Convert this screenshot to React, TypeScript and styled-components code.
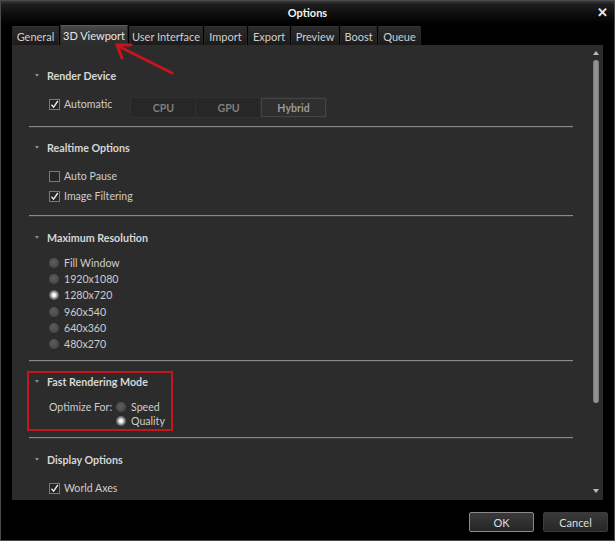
import React from "react";
import styled, { createGlobalStyle } from "styled-components";

const Global = createGlobalStyle`
  html, body { margin: 0; padding: 0; background: #000; }
  body { font-family: "Lato", "Segoe UI", "Open Sans", sans-serif; font-size: 11px; color: #cfcfcf; }
  * { box-sizing: border-box; }
`;

const Window = styled.div`
  position: relative;
  width: 615px;
  height: 541px;
  background: #000;
  border: 1px solid #4a4a4a;
  display: flex;
  flex-direction: column;
  overflow: hidden;
`;

const TitleBar = styled.div`
  position: relative;
  height: 24px;
  display: flex;
  align-items: center;
  justify-content: center;
  background: linear-gradient(#3a3a3a 0px, #1e1e1e 3px, #0a0a0a 16px, #000 24px);
  color: #f2f2f2;
  font-weight: 700;
  font-size: 11px;
  padding-bottom: 2px;
`;

const Close = styled.div`
  position: absolute;
  right: 6px;
  top: 3px;
  color: #e8e8e8;
  font-weight: 700;
  font-size: 13px;
`;

const TabRow = styled.div`
  display: flex;
  height: 20px;
  padding-left: 11px;
  align-items: flex-end;
`;

const Tab = styled.div<{ $w: number; $active?: boolean }>`
  width: ${(p) => p.$w}px;
  height: ${(p) => (p.$active ? 20 : 19)}px;
  margin-right: 1px;
  display: flex;
  align-items: center;
  justify-content: center;
  color: ${(p) => (p.$active ? "#e6e6e6" : "#cfcfcf")};
  background: ${(p) =>
    p.$active
      ? "linear-gradient(#4a4a4a, #363636 40%, #2c2c2c)"
      : "linear-gradient(#2c2c2c, #1b1b1b)"};
  border-top: 1px solid ${(p) => (p.$active ? "#5a5a5a" : "#333")};
  border-left: 1px solid #262626;
  border-right: 1px solid #262626;
  font-size: 11px;
`;

const Panel = styled.div`
  margin: 0 11px;
  height: 455px;
  background: #2c2c2c;
  display: flex;
  overflow: hidden;
`;

const Content = styled.div`
  flex: 1;
  padding: 0 15px 0 17px;
  display: flex;
  flex-direction: column;
`;

const Section = styled.div<{ $pt: number; $pb: number }>`
  position: relative;
  padding-top: ${(p) => p.$pt}px;
  padding-bottom: ${(p) => p.$pb}px;
`;

const Header = styled.div`
  height: 16px;
  display: flex;
  align-items: center;
  padding-left: 6px;
  gap: 8px;
  font-weight: 700;
  color: #d6d6d6;
  font-size: 10.7px;
`;

const Caret = styled.span`
  width: 0;
  height: 0;
  border-left: 2.5px solid transparent;
  border-right: 2.5px solid transparent;
  border-top: 3px solid #8a8a8a;
`;

const Body = styled.div<{ $mt: number }>`
  margin-top: ${(p) => p.$mt}px;
  padding-left: 20px;
  display: flex;
  flex-direction: column;
`;

const Row = styled.div<{ $h: number; $w?: number }>`
  height: ${(p) => p.$h}px;
  ${(p) => (p.$w ? `width: ${p.$w}px;` : "")}
  display: flex;
  align-items: center;
  gap: 4px;
  color: #cdcdcd;
  font-size: 10.6px;
  white-space: nowrap;
`;

const DeviceRow = styled.div`
  display: flex;
  align-items: flex-start;
`;

const Box = styled.span`
  width: 11px;
  height: 11px;
  border: 1px solid #7a7a7a;
  background: #262626;
  display: flex;
  align-items: center;
  justify-content: center;
  flex: none;
`;

const Dot = styled.span<{ $on?: boolean }>`
  width: 10px;
  height: 10px;
  border-radius: 50%;
  flex: none;
  margin-right: 1px;
  background: ${(p) =>
    p.$on
      ? "radial-gradient(circle at 50% 50%, #ffffff 0, #f0f0f0 1.8px, #9a9a9a 3.2px, #5a5a5a 5px)"
      : "radial-gradient(circle at 45% 40%, #5e5e5e 0, #4a4a4a 5px)"};
`;

const Segments = styled.div`
  display: flex;
  margin-top: 1px;
  background: #262626;
  border: 1px solid #303030;
`;

const Segment = styled.div<{ $on?: boolean }>`
  width: 65px;
  height: 19px;
  display: flex;
  align-items: center;
  justify-content: center;
  font-weight: 700;
  font-size: 10.6px;
  color: ${(p) => (p.$on ? "#9a9a9a" : "#7e7e7e")};
  background: ${(p) => (p.$on ? "#2f2f2f" : "#272727")};
  border: 1px solid ${(p) => (p.$on ? "#444" : "transparent")};
  border-right: 1px solid ${(p) => (p.$on ? "#444" : "#303030")};
`;

const Divider = styled.div`
  height: 1px;
  background: #8a8a8a;
  box-shadow: 0 1px 0 #3a3a3a;
  flex: none;
`;

const OptimizeGrid = styled.div`
  display: grid;
  grid-template-columns: 67px auto;
  grid-template-rows: 14px 14px;
  align-items: center;
  color: #cdcdcd;
  font-size: 10.6px;
  white-space: nowrap;
`;

const Highlight = styled.div`
  position: absolute;
  left: -2px;
  top: 10px;
  width: 146px;
  height: 60px;
  border: 2px solid #c4161c;
  pointer-events: none;
`;

const ScrollCol = styled.div`
  width: 15px;
  display: flex;
  flex-direction: column;
  align-items: center;
  padding-top: 6px;
`;

const ArrowUp = styled.span`
  width: 0;
  height: 0;
  border-left: 3px solid transparent;
  border-right: 3px solid transparent;
  border-bottom: 4px solid #bdbdbd;
`;

const ArrowDown = styled.span`
  width: 0;
  height: 0;
  border-left: 3px solid transparent;
  border-right: 3px solid transparent;
  border-top: 4px solid #bdbdbd;
  margin-top: 86px;
`;

const Thumb = styled.div`
  margin-top: 5px;
  width: 6px;
  height: 343px;
  border-radius: 3px;
  background: linear-gradient(90deg, #7a7a7a, #9a9a9a 50%, #7a7a7a);
`;

const Footer = styled.div`
  display: flex;
  justify-content: flex-end;
  gap: 9px;
  padding: 12px 6px 0 0;
`;

const Button = styled.div<{ $focus?: boolean }>`
  width: 65px;
  height: 20px;
  display: flex;
  align-items: center;
  justify-content: center;
  color: #dedede;
  border-radius: 2px;
  background: linear-gradient(#3a3a3a, #262626);
  border: 1px solid ${(p) => (p.$focus ? "#8a8a8a" : "#3c3c3c")};
`;

const ArrowOverlay = styled.svg`
  position: absolute;
  left: 0;
  top: 0;
  pointer-events: none;
`;

const Check = () => (
  <svg width="9" height="9" viewBox="0 0 9 9">
    <path d="M1.5 4.8 L3.6 7.2 L7.8 1" fill="none" stroke="#e8e8e8" strokeWidth="1.4" />
  </svg>
);

const CheckItem = ({ label, on }: { label: string; on?: boolean }) => (
  <Row $h={20}>
    <Box>{on && <Check />}</Box>
    {label}
  </Row>
);

const RadioItem = ({ label, on, h }: { label: string; on?: boolean; h: number }) => (
  <Row $h={h}>
    <Dot $on={on} />
    {label}
  </Row>
);

const tabs: [string, number][] = [
  ["General", 47],
  ["3D Viewport", 68],
  ["User Interface", 74],
  ["Import", 43],
  ["Export", 42],
  ["Preview", 48],
  ["Boost", 37],
  ["Queue", 43],
];

const resolutions = ["Fill Window", "1920x1080", "1280x720", "960x540", "640x360", "480x270"];

export default function App() {
  return (
    <>
      <Global />
      <Window>
        <TitleBar>
          Options
          <Close>✕</Close>
        </TitleBar>
        <TabRow>
          {tabs.map(([t, w]) => (
            <Tab key={t} $w={w} $active={t === "3D Viewport"}>
              {t}
            </Tab>
          ))}
        </TabRow>
        <Panel>
          <Content>
            <Section $pt={22} $pb={8}>
              <Header>
                <Caret />
                Render Device
              </Header>
              <Body $mt={13}>
                <DeviceRow>
                  <Row $h={16} $w={81}>
                    <Box>
                      <Check />
                    </Box>
                    Automatic
                  </Row>
                  <Segments>
                    <Segment>CPU</Segment>
                    <Segment>GPU</Segment>
                    <Segment $on>Hybrid</Segment>
                  </Segments>
                </DeviceRow>
              </Body>
            </Section>
            <Divider />
            <Section $pt={12} $pb={9}>
              <Header>
                <Caret />
                Realtime Options
              </Header>
              <Body $mt={11}>
                <CheckItem label="Auto Pause" />
                <CheckItem label="Image Filtering" on />
              </Body>
            </Section>
            <Divider />
            <Section $pt={13} $pb={8}>
              <Header>
                <Caret />
                Maximum Resolution
              </Header>
              <Body $mt={10}>
                {resolutions.map((r) => (
                  <RadioItem key={r} label={r} on={r === "1280x720"} h={16.2} />
                ))}
              </Body>
            </Section>
            <Divider />
            <Section $pt={12} $pb={9}>
              <Highlight />
              <Header>
                <Caret />
                Fast Rendering Mode
              </Header>
              <Body $mt={11}>
                <OptimizeGrid>
                  <span>Optimize For:</span>
                  <RadioItem label="Speed" h={14} />
                  <span />
                  <RadioItem label="Quality" on h={14} />
                </OptimizeGrid>
              </Body>
            </Section>
            <Divider />
            <Section $pt={13} $pb={0}>
              <Header>
                <Caret />
                Display Options
              </Header>
              <Body $mt={11}>
                <CheckItem label="World Axes" on />
              </Body>
            </Section>
          </Content>
          <ScrollCol>
            <ArrowUp />
            <Thumb />
            <ArrowDown />
          </ScrollCol>
        </Panel>
        <Footer>
          <Button $focus>OK</Button>
          <Button>Cancel</Button>
        </Footer>
        <ArrowOverlay width="615" height="541" viewBox="0 0 615 541">
          <g stroke="#c8141e" strokeWidth="3" strokeLinecap="round" fill="none">
            <line x1="171" y1="72" x2="117" y2="45" />
            <path d="M130 44 L116 44 L121 57" />
          </g>
        </ArrowOverlay>
      </Window>
    </>
  );
}
